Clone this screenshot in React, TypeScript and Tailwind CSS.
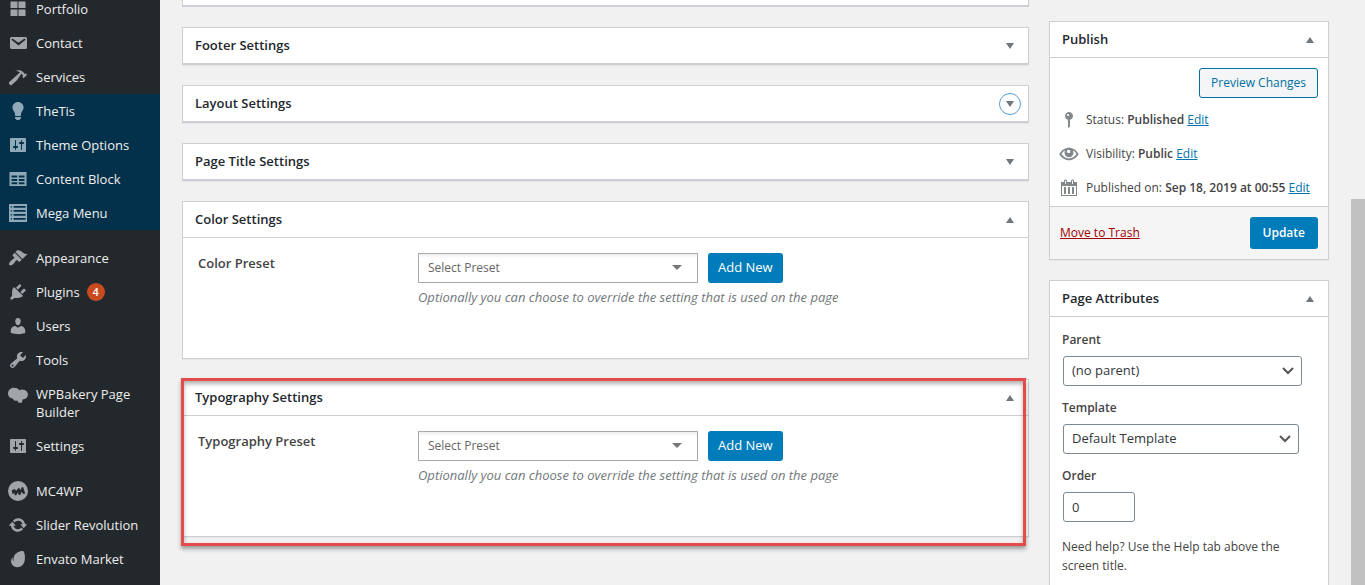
import type { ReactNode } from "react";

const ICONS = {
  grid: "M2.5 2.5h7v6.5h-7zM10.5 2.5h7v6.5h-7zM2.5 10.5h7V17h-7zM10.5 10.5h7V17h-7z",
  email:
    "M3.87 4h13.25C18.37 4 19 4.59 19 5.79v8.42c0 1.19-.63 1.79-1.88 1.79H3.87c-1.25 0-1.88-.6-1.88-1.79V5.79c0-1.2.63-1.79 1.88-1.79zm6.62 8.6l6.74-5.53c.24-.2.43-.66.13-1.07-.29-.41-.82-.42-1.17-.17l-5.7 3.86L4.8 5.83c-.35-.25-.88-.24-1.17.17-.3.41-.11.87.13 1.07z",
  hammer:
    "M17.7 6.32l1.41 1.42-3.47 3.41-1.42-1.42.84-.82c-.32-.76-.81-1.57-1.51-2.31l-4.61 6.59-5.26 4.7c-.39.39-1.02.39-1.42 0l-1.2-1.21c-.39-.39-.39-1.02 0-1.41l10.97-9.92c-1.37-.86-3.21-1.46-5.67-1.48 2.7-.82 4.95-.93 6.58-.3 1.7.66 2.82 2.2 3.91 3.58z",
  bulb: "M10 1c3.11 0 5.63 2.52 5.63 5.62 0 1.84-2.03 4.58-2.03 4.58-.33.44-.6 1.25-.6 1.8v1c0 .55-.45 1-1 1H8c-.55 0-1-.45-1-1v-1c0-.55-.27-1.36-.6-1.8 0 0-2.02-2.74-2.02-4.58C4.38 3.52 6.89 1 10 1zM7 16.87V16h6v.87c0 .62-.13 1.13-.75 1.13H12c0 .62-.4 1-1.02 1h-2c-.61 0-.98-.38-.98-1h-.25c-.62 0-.75-.51-.75-1.13z",
  settings:
    "M18 16V4c0-.55-.45-1-1-1H3c-.55 0-1 .45-1 1v12c0 .55.45 1 1 1h14c.55 0 1-.45 1-1zM8 11h1c.55 0 1 .45 1 1s-.45 1-1 1H8v1.5c0 .28-.22.5-.5.5s-.5-.22-.5-.5V13H6c-.55 0-1-.45-1-1s.45-1 1-1h1V5.5c0-.28.22-.5.5-.5s.5.22.5.5V11zm5-2h-1c-.55 0-1-.45-1-1s.45-1 1-1h1V5.5c0-.28.22-.5.5-.5s.5.22.5.5V7h1c.55 0 1 .45 1 1s-.45 1-1 1h-1v5.5c0 .28-.22.5-.5.5s-.5-.22-.5-.5V9z",
  table:
    "M1.5 3h17v14h-17zM3.500 6.400v2h5.700v-2zM10.800 6.400v2h5.700v-2zM3.500 9.900v2h5.700v-2zM10.800 9.900v2h5.700v-2zM3.500 13.300v2h5.700v-2zM10.800 13.300v2h5.700v-2z",
  list: "M1 1h18v18H1zM2.7 3.2v1.4h1.4V3.2zM5.6 3v1.8h12V3zM2.7 7.2v1.4h1.4V7.2zM5.6 7v1.8h12V7zM2.7 11.2v1.4h1.4v-1.4zM5.6 11v1.8h12V11zM2.7 15.2v1.4h1.4v-1.4zM5.6 15v1.8h12V15z",
  brush:
    "M14.48 11.06L7.41 3.99l1.5-1.5c.5-.56 2.3-.47 3.51.32 1.21.8 1.43 1.28 2.91 2.1 1.18.64 2.45 1.26 4.45.85zm-.71.71L6.7 4.7 4.93 6.47c-.39.39-.39 1.02 0 1.41l1.06 1.06c.39.39.39 1.03 0 1.42-.6.6-1.43 1.11-2.21 1.69-.35.26-.7.53-1.01.84C1.43 14.23.4 16.08 1.4 17.07c.99 1 2.84-.03 4.18-1.36.31-.31.58-.66.85-1.02.57-.78 1.08-1.61 1.69-2.21.39-.39 1.02-.39 1.41 0l1.06 1.06c.39.39 1.02.39 1.41 0z",
  plug: "M13.11 4.36L9.87 7.6 8 5.73l3.24-3.24c.35-.34 1.05-.2 1.56.32.52.51.66 1.21.31 1.55zm-8 1.77l.91-1.12 9.01 9.01-1.19.84c-.71.71-2.63 1.16-3.82 1.16H6.14L4.9 17.26c-.59.59-1.54.59-2.12 0-.59-.58-.59-1.53 0-2.12l1.24-1.24v-3.88c0-1.13.4-3.19 1.09-3.89zm7.26 3.97l3.24-3.24c.34-.35 1.04-.21 1.55.31.52.51.66 1.21.31 1.55l-3.24 3.25z",
  user: "M10 9.25c-2.27 0-2.73-3.44-2.73-3.44C7 4.02 7.82 2 9.97 2c2.16 0 2.98 2.02 2.71 3.81 0 0-.41 3.44-2.68 3.44zm0 2.57L12.72 10c2.39 0 4.52 2.33 4.52 4.53v2.49s-3.65 1.13-7.24 1.13c-3.65 0-7.24-1.13-7.24-1.13v-2.49c0-2.25 1.94-4.48 4.47-4.48z",
  wrench:
    "M16.68 9.77c-1.34 1.34-3.3 1.67-4.95.99l-5.41 6.52c-.99.99-2.59.99-3.58 0s-.99-2.59 0-3.57l6.52-5.42c-.68-1.65-.35-3.61.99-4.95 1.28-1.28 3.12-1.62 4.72-1.06l-2.89 2.89 2.82 2.82 2.86-2.87c.53 1.58.18 3.39-1.08 4.65zM3.81 16.21c.4.39 1.04.39 1.43 0 .4-.4.4-1.04 0-1.43-.39-.4-1.03-.4-1.43 0-.39.39-.39 1.03 0 1.43z",
  bakery:
    "M6 3.8c2.300 0 4 .8 5.200 2.400 1-.6 2.200-.9 3.400-.8 3 .2 5.300 2.300 5.300 5 0 2.800-2.300 4.800-5.300 5l-.6 3c-1.700.6-3.200.4-4-.2l-.5-1.800c-1.200.5-2.500.4-3.400-.2-.8-.5-1.200-1-1.600-1.600C1.900 14.300 0 12.400 0 9.600c0-3.200 2.600-5.800 6-5.800z",
  mc4wp:
    "M10 0a10 10 0 100 20 10 10 0 000-20zM3.800 9.200L7 8l1 2 2.500-3 1.300.6.4 1.900L14 6l1.200.3 2 6.200-2 .6-1.400-2.400L12 14.300l-1.500-.8-.5-2.300-1.900 3.200-1.400-.4-.4-2.500-.8 1.600-1.200-.6z",
  update:
    "M10.2 3.28c3.53 0 6.43 2.61 6.92 6h2.08l-3.5 4-3.5-4h2.32c-.45-1.97-2.21-3.45-4.32-3.45-1.45 0-2.73.71-3.54 1.78L4.95 5.66C6.23 4.2 8.11 3.28 10.2 3.28zm-.4 13.44c-3.52 0-6.43-2.61-6.92-6H.8l3.5-4c1.17 1.33 2.33 2.67 3.5 4H5.48c.45 1.97 2.21 3.45 4.32 3.45 1.45 0 2.73-.71 3.54-1.78l1.71 1.95c-1.28 1.46-3.15 2.38-5.25 2.38z",
  leaf: "M15.500 2.200c-3.500-.6-8.400 1.800-9.600 5.600-.6 2-.4 3.600 0 4.700-1.400-1.300-1.500-3-1.200-4.500-2 1.900-2.200 5.400-.6 7.500C5.300 17.400 7.400 18.300 9.600 18.200c4.300-.1 6.600-3.400 7.200-7.200.4-3.400.100-6.700-1.300-8.800z",
  pin: "M14 6c0 1.860-1.280 3.410-3 3.860V16c0 1-2 2-2 2V9.860c-1.720-.45-3-2-3-3.860 0-2.210 1.790-4 4-4s4 1.790 4 4zM8 5c0 .55.45 1 1 1s1-.45 1-1-.45-1-1-1-1 .45-1 1z",
  eye: "M10 3.700c4 0 7.500 2.400 9.700 6.300-2.200 3.900-5.700 6.300-9.700 6.300S2.500 13.900.3 10C2.500 6.100 6 3.700 10 3.700zM6.200 6.300C4.700 7.100 3.400 8.400 2.500 10c1.700 2.800 4.400 4.400 7.500 4.400s5.800-1.600 7.500-4.400c-.9-1.600-2.200-2.900-3.700-3.700.5.800.7 1.600.7 2.500 0 2.500-2 4.500-4.500 4.500s-4.500-2-4.500-4.500c0-.9.300-1.700.7-2.500zM9.600 5.700c-1 0-1.700.8-1.700 1.700s.7 1.700 1.700 1.700 1.700-.8 1.700-1.700-.8-1.700-1.700-1.700z",
  calendar:
    "M15 4h3v14H2V4h3V3c0-.83.67-1.500 1.500-1.500S8 2.170 8 3v1h4V3c0-.83.67-1.500 1.500-1.500S15 2.170 15 3v1zM6 3v2.500c0 .28.22.5.5.5s.5-.22.5-.5V3c0-.28-.22-.5-.5-.5S6 2.720 6 3zm7 0v2.500c0 .28.22.5.5.5s.5-.22.5-.5V3c0-.28-.22-.5-.5-.5s-.5.22-.5.5zm4 14V8H3v9h14zM7 16V9H5v7h2zm4 0V9H9v7h2zm4 0V9h-2v7h2z",
};

type IconName = keyof typeof ICONS;

function Icon({ name, className = "" }: { name: IconName; className?: string }) {
  return (
    <svg viewBox="0 0 20 20" className={`size-5 shrink-0 ${className}`} fill="currentColor" fillRule="evenodd" aria-hidden="true">
      <path d={ICONS[name]} />
    </svg>
  );
}

interface MenuEntry {
  label: string;
  icon: IconName;
  count?: number;
}

const CONTENT_MENU: MenuEntry[] = [
  { label: "Portfolio", icon: "grid" },
  { label: "Contact", icon: "email" },
  { label: "Services", icon: "hammer" },
];

const THEME_MENU: MenuEntry[] = [
  { label: "TheTis", icon: "bulb" },
  { label: "Theme Options", icon: "settings" },
  { label: "Content Block", icon: "table" },
  { label: "Mega Menu", icon: "list" },
];

const ADMIN_MENU: MenuEntry[] = [
  { label: "Appearance", icon: "brush" },
  { label: "Plugins", icon: "plug", count: 4 },
  { label: "Users", icon: "user" },
  { label: "Tools", icon: "wrench" },
  { label: "WPBakery Page Builder", icon: "bakery" },
  { label: "Settings", icon: "settings" },
];

const EXTRA_MENU: MenuEntry[] = [
  { label: "MC4WP", icon: "mc4wp" },
  { label: "Slider Revolution", icon: "update" },
  { label: "Envato Market", icon: "leaf" },
];

function MenuGroup({ items, tinted = false }: { items: MenuEntry[]; tinted?: boolean }) {
  return (
    <ul className={tinted ? "bg-[#03304a] text-[#8fa9b8]" : "text-[#a0a5aa]"}>
      {items.map((item) => (
        <li key={item.label}>
          <a href="#" className="flex gap-2 p-2">
            <Icon name={item.icon} className="-my-px" />
            <span className="text-[13px] leading-[18px] text-[#eeeeee]">{item.label}</span>
            {item.count && (
              <span className="-ml-px flex size-[18px] items-center justify-center rounded-full bg-[#ca4a1f] text-[11px] font-semibold text-white">
                {item.count}
              </span>
            )}
          </a>
        </li>
      ))}
    </ul>
  );
}

interface BoxProps {
  title: string;
  open?: boolean;
  focused?: boolean;
  children?: ReactNode;
}

function MetaBox({ title, open = false, focused = false, children }: BoxProps) {
  return (
    <section className="border border-[#ccd0d4] bg-white shadow-[0_1px_1px_rgba(0,0,0,0.04)]">
      <header className="flex h-9 items-center justify-between border-b border-[#ccd0d4] pr-[7px] pl-3">
        <h2 className="text-[13px] font-semibold text-[#23282d]">{title}</h2>
        <button
          type="button"
          aria-label={`Toggle panel: ${title}`}
          className={`flex size-[22px] items-center justify-center rounded-full text-[#72777c] ${focused ? "border border-[#5b9dd9]" : ""}`}
        >
          <svg viewBox="0 0 8 6" className="mt-px h-[6px] w-2" fill="currentColor" aria-hidden="true">
            <path d={open ? "M0 6h8L4 0z" : "M0 0h8L4 6z"} />
          </svg>
        </button>
      </header>
      {children}
    </section>
  );
}

function PresetField({ id, label }: { id: string; label: string }) {
  return (
    <div className="flex h-[120px] px-[15px] pt-[15px]">
      <label htmlFor={id} className="w-[220px] shrink-0 text-[13px] leading-5 font-semibold text-[#444444]">
        {label}
      </label>
      <div>
        <div className="flex gap-[10px]">
          <div className="relative w-[280px]">
            <select
              id={id}
              className="h-[30px] w-full appearance-none border border-[#aaaaaa] bg-white bg-linear-to-b from-[#eeeeee] to-white to-15% pl-[9px] text-[12px] text-[#666666]"
            >
              <option>Select Preset</option>
            </select>
            <svg viewBox="0 0 10 5" className="pointer-events-none absolute top-3 right-4 h-[5px] w-[10px]" fill="#777777" aria-hidden="true">
              <path d="M0 0h10L5 5z" />
            </svg>
          </div>
          <button type="button" className="h-[30px] rounded-[3px] bg-[#007cba] px-[10px] text-[13px] font-medium text-white">
            Add New
          </button>
        </div>
        <p className="mt-1 text-[13px] leading-5 text-[#72777c] italic">
          Optionally you can choose to override the setting that is used on the page
        </p>
      </div>
    </div>
  );
}

function StatusRow({ icon, label, value }: { icon: IconName; label: string; value: string }) {
  return (
    <div className="flex h-[34px] items-center gap-[7px] pl-[9px] text-[12px] whitespace-nowrap">
      <Icon name={icon} className="text-[#82878c]" />
      <span>
        {label}: <b className="font-semibold">{value}</b>{" "}
        <a href="#" className="text-[#0073aa] underline">
          Edit
        </a>
      </span>
    </div>
  );
}

function AttributeSelect({ id, label, value, className }: { id: string; label: string; value: string; className: string }) {
  return (
    <div>
      <label htmlFor={id} className="block text-[12px] leading-5 font-semibold">
        {label}
      </label>
      <div className={`relative mt-[6px] ml-px ${className}`}>
        <select id={id} className="h-[30px] w-full appearance-none rounded-[3px] border border-[#7e8993] bg-white pl-2 text-[13px] text-[#32373c]">
          <option>{value}</option>
        </select>
        <svg viewBox="0 0 12 8" className="pointer-events-none absolute top-[11px] right-2 h-2 w-3" fill="none" stroke="#555555" strokeWidth="2" aria-hidden="true">
          <path d="M1 1l5 5 5-5" />
        </svg>
      </div>
    </div>
  );
}

export default function App() {
  return (
    <div className="flex h-screen overflow-hidden bg-[#f1f1f1] font-['Open_Sans','Noto_Sans',sans-serif] text-[12px] text-[#444444]">
      <nav aria-label="Admin menu" className="w-40 shrink-0 bg-[#23282d]">
        <div className="-mt-2">
          <MenuGroup items={CONTENT_MENU} />
          <MenuGroup items={THEME_MENU} tinted />
          <div className="h-[11px]" />
          <MenuGroup items={ADMIN_MENU} />
          <div className="h-[11px]" />
          <MenuGroup items={EXTRA_MENU} />
        </div>
      </nav>

      <main className="flex min-w-0 flex-1 items-start gap-5 px-[22px]">
        <div className="flex min-w-0 flex-1 flex-col gap-5">
          {/* bottom edge of the panel scrolled out above */}
          <div className="h-[7px] border-x border-b-2 border-[#ccd0d4] bg-white" />
          <MetaBox title="Footer Settings" />
          <MetaBox title="Layout Settings" focused />
          <MetaBox title="Page Title Settings" />
          <MetaBox title="Color Settings" open>
            <PresetField id="color-preset" label="Color Preset" />
          </MetaBox>
          <div className="relative">
            <MetaBox title="Typography Settings" open>
              <PresetField id="typography-preset" label="Typography Preset" />
            </MetaBox>
            {/* highlight frame over the typography panel */}
            <div className="pointer-events-none absolute -top-px right-[3px] -bottom-[9px] -left-px border-3 border-[#e64b4b] shadow-[0_3px_4px_rgba(0,0,0,0.35),inset_0_3px_4px_rgba(0,0,0,0.3)]" />
          </div>
        </div>

        <aside className="mt-[21px] flex w-[280px] shrink-0 flex-col gap-5">
          <MetaBox title="Publish" open>
            <div className="flex justify-end px-[10px] pt-[10px] pb-[5px]">
              <button type="button" className="h-[30px] rounded-[3px] border border-[#0071a1] bg-[#f3f5f6] px-[11px] text-[12px] text-[#0071a1]">
                Preview Changes
              </button>
            </div>
            <StatusRow icon="pin" label="Status" value="Published" />
            <StatusRow icon="eye" label="Visibility" value="Public" />
            <StatusRow icon="calendar" label="Published on" value="Sep 18, 2019 at 00:55" />
            <div className="mt-px flex items-center justify-between border-t border-[#ccd0d4] bg-[#f5f5f5] p-[10px]">
              <a href="#" className="text-[12px] text-[#a00000] underline">
                Move to Trash
              </a>
              <button type="button" className="h-8 rounded-[3px] bg-[#007cba] px-[13px] text-[12px] font-semibold text-white">
                Update
              </button>
            </div>
          </MetaBox>

          <MetaBox title="Page Attributes" open>
            <div className="flex flex-col gap-3 px-3 pt-[13px] pb-3">
              <AttributeSelect id="parent" label="Parent" value="(no parent)" className="w-[239px]" />
              <AttributeSelect id="template" label="Template" value="Default Template" className="w-[236px]" />
              <div>
                <label htmlFor="order" className="block text-[12px] leading-5 font-semibold">
                  Order
                </label>
                <input id="order" type="text" defaultValue="0" className="mt-[6px] ml-px h-[30px] w-[72px] rounded-[3px] border border-[#7e8993] bg-white px-2 text-[13px] text-[#32373c]" />
              </div>
              <p className="mt-[3px] text-[12px] leading-[19px]">Need help? Use the Help tab above the screen title.</p>
            </div>
          </MetaBox>
        </aside>
      </main>

      {/* page scroll track */}
      <div className="flex w-[14px] shrink-0 flex-col bg-[#f1f1f1]">
        <div className="h-[34%]" />
        <div className="flex-1 bg-[#c1c1c1]" />
      </div>
    </div>
  );
}
